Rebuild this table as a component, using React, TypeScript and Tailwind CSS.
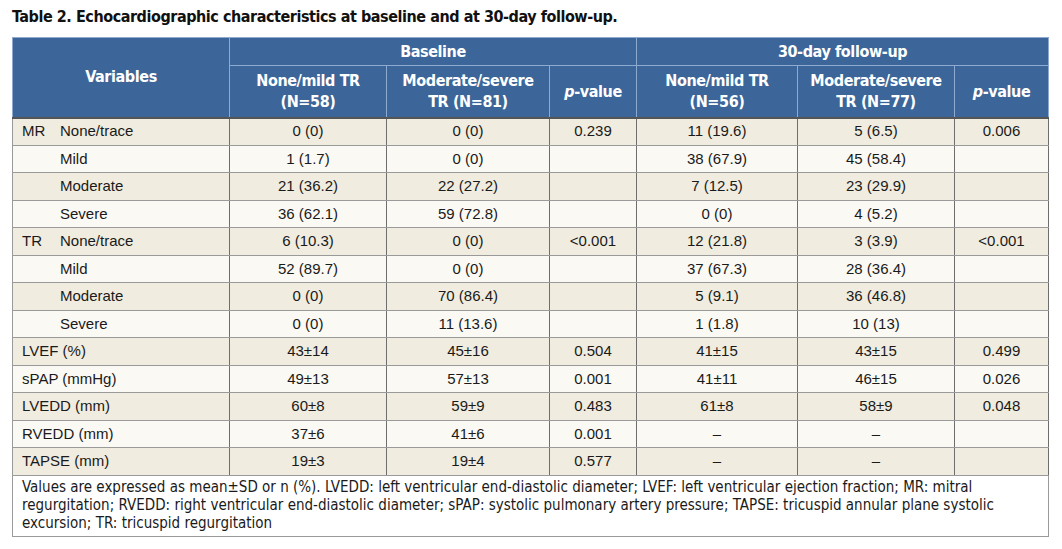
import React from "react";

type Row = {
  group?: string;
  label: string;
  indent?: boolean;
  cells: [string, string, string, string, string, string];
};

const rows: Row[] = [
  { group: "MR", label: "None/trace", indent: true, cells: ["0 (0)", "0 (0)", "0.239", "11 (19.6)", "5 (6.5)", "0.006"] },
  { label: "Mild", indent: true, cells: ["1 (1.7)", "0 (0)", "", "38 (67.9)", "45 (58.4)", ""] },
  { label: "Moderate", indent: true, cells: ["21 (36.2)", "22 (27.2)", "", "7 (12.5)", "23 (29.9)", ""] },
  { label: "Severe", indent: true, cells: ["36 (62.1)", "59 (72.8)", "", "0 (0)", "4 (5.2)", ""] },
  { group: "TR", label: "None/trace", indent: true, cells: ["6 (10.3)", "0 (0)", "<0.001", "12 (21.8)", "3 (3.9)", "<0.001"] },
  { label: "Mild", indent: true, cells: ["52 (89.7)", "0 (0)", "", "37 (67.3)", "28 (36.4)", ""] },
  { label: "Moderate", indent: true, cells: ["0 (0)", "70 (86.4)", "", "5 (9.1)", "36 (46.8)", ""] },
  { label: "Severe", indent: true, cells: ["0 (0)", "11 (13.6)", "", "1 (1.8)", "10 (13)", ""] },
  { label: "LVEF (%)", cells: ["43±14", "45±16", "0.504", "41±15", "43±15", "0.499"] },
  { label: "sPAP (mmHg)", cells: ["49±13", "57±13", "0.001", "41±11", "46±15", "0.026"] },
  { label: "LVEDD (mm)", cells: ["60±8", "59±9", "0.483", "61±8", "58±9", "0.048"] },
  { label: "RVEDD (mm)", cells: ["37±6", "41±6", "0.001", "–", "–", ""] },
  { label: "TAPSE (mm)", cells: ["19±3", "19±4", "0.577", "–", "–", ""] },
];

const cond = "font-['DejaVu_Sans_Condensed','Liberation_Sans_Narrow',sans-serif]";
const th = "border border-[#8eaad0] font-bold";
const thLow = "border border-[#8eaad0] border-b-2 border-b-[#555] font-bold";

function PValue() {
  return (
    <>
      <span className="italic">p</span>-value
    </>
  );
}

export default function App() {
  return (
    <div className="min-h-[549px] w-[1062px] bg-white pl-[12px] pt-[6px] font-['Liberation_Sans',Arial,sans-serif] text-[#1a1a1a]">
      <h1 className={`${cond} text-[16px] font-bold leading-[22px] tracking-[-0.45px] text-[#111]`}>
        Table 2. Echocardiographic characteristics at baseline and at 30-day follow-up.
      </h1>
      <table className="mt-[9px] w-[1036px] table-fixed border-collapse border border-[#9a9a9a] text-[15px]">
        <colgroup>
          <col className="w-[217px]" />
          <col className="w-[157px]" />
          <col className="w-[163px]" />
          <col className="w-[87px]" />
          <col className="w-[161px]" />
          <col className="w-[157px]" />
          <col className="w-[94px]" />
        </colgroup>
        <thead className={`${cond} bg-[#3c6699] text-[16px] tracking-[-0.4px] text-white`}>
          <tr className="h-[28px]">
            <th rowSpan={2} className={thLow}>
              Variables
            </th>
            <th colSpan={3} className={th}>Baseline</th>
            <th colSpan={3} className={th}>30-day follow-up</th>
          </tr>
          <tr className="h-[52px] leading-[21px]">
            <th className={thLow}>
              None/mild TR
              <br />
              (N=58)
            </th>
            <th className={thLow}>
              Moderate/severe
              <br />
              TR (N=81)
            </th>
            <th className={thLow}>
              <PValue />
            </th>
            <th className={thLow}>
              None/mild TR
              <br />
              (N=56)
            </th>
            <th className={thLow}>
              Moderate/severe
              <br />
              TR (N=77)
            </th>
            <th className={thLow}>
              <PValue />
            </th>
          </tr>
        </thead>
        <tbody>
          {rows.map((r, i) => (
            <tr key={i} className={`h-[27.5px] ${i % 2 === 0 ? "bg-[#f0ecdf]" : "bg-[#faf9f4]"}`}>
              <td className="border-y border-r border-y-[#9a9a9a] border-r-[#6e6e6e] pl-[9px]">
                <div className="flex">
                  {r.indent ? <span className="w-[38px]">{r.group ?? ""}</span> : null}
                  <span>{r.label}</span>
                </div>
              </td>
              {r.cells.map((c, j) => (
                <td key={j} className="border-y border-r border-y-[#9a9a9a] border-r-[#6e6e6e] text-center">
                  {c}
                </td>
              ))}
            </tr>
          ))}
          <tr className="bg-white">
            <td
              colSpan={7}
              className={`${cond} border-t border-t-[#9a9a9a] px-[9px] pb-[4px] pt-[2px] text-[15px] leading-[18px] text-[#1a1a1a]`}
            >
              Values are expressed as mean±SD or n (%). LVEDD: left ventricular end-diastolic diameter; LVEF: left ventricular ejection fraction; MR: mitral
              <br />
              regurgitation; RVEDD: right ventricular end-diastolic diameter; sPAP: systolic pulmonary artery pressure; TAPSE: tricuspid annular plane systolic
              <br />
              excursion; TR: tricuspid regurgitation
            </td>
          </tr>
        </tbody>
      </table>
    </div>
  );
}
